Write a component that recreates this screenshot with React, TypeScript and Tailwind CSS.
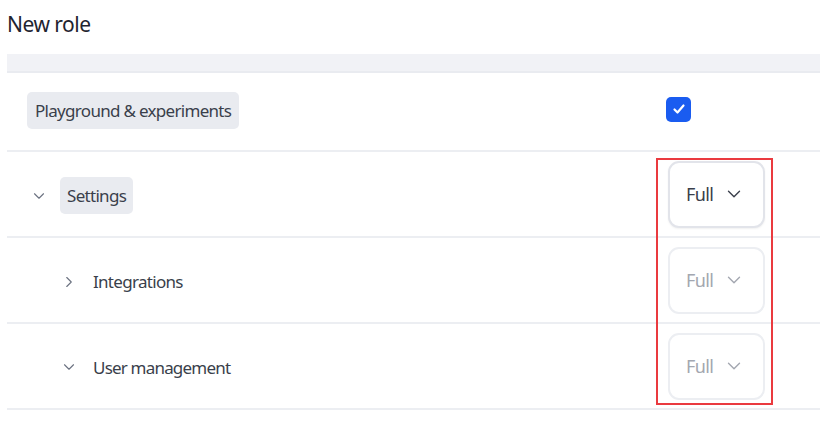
import { ChevronDown, ChevronRight } from 'lucide-react';

const font = { fontFamily: '"Noto Sans", "Liberation Sans", sans-serif' };

const Select = ({ disabled }: { disabled?: boolean }) => (
  <div
    className={
      'flex h-[67px] w-[97px] items-center rounded-[11px] border-2 bg-white pl-[16px] text-[18px] ' +
      (disabled
        ? 'border-[#eceef2] text-[#a3a7b0]'
        : 'border-[#e2e4ea] text-[#3a3f4b] shadow-[0_1px_2px_rgba(0,0,0,0.06)]')
    }
  >
    <span className="tracking-[-0.6px]">Full</span>
    <ChevronDown size={22} strokeWidth={1.5} className="ml-[10px]" />
  </div>
);

const App = () => {
  return (
    <div
      className="relative h-[429px] w-[820px] overflow-hidden bg-white pl-[7px] text-[#2c313c]"
      style={font}
    >
      {/* Title */}
      <div className="flex h-[54px] items-start pt-[9px] text-[21px] tracking-[-0.5px] text-[#1f2430]">
        New role
      </div>

      {/* Header bar */}
      <div className="h-[19px] border-b-2 border-[#e9ebf0] bg-[#f1f2f6]" />

      {/* Playground */}
      <div className="flex h-[79px] items-center border-b-2 border-[#eceef2] pl-[20px] pr-[129px]">
        <span className="mb-[2px] rounded-[5px] bg-[#e9ebf0] px-[8px] py-[6px] text-[17px] tracking-[-0.7px] text-[#3a3f4b]">
          Playground &amp; experiments
        </span>
        <div className="mb-[5px] ml-auto flex h-[25px] w-[25px] items-center justify-center rounded-[5px] bg-[#1a5cf0]">
          <svg width="14" height="14" viewBox="0 0 14 14" fill="none">
            <path d="M2.5 7.5L5.5 10.5L11.5 3.5" stroke="white" strokeWidth="2.2" strokeLinecap="round" strokeLinejoin="round" />
          </svg>
        </div>
      </div>

      {/* Settings */}
      <div className="flex h-[86px] items-center border-b-2 border-[#eceef2] pl-[23px] pr-[55px]">
        <ChevronDown size={18} strokeWidth={1.5} className="mt-[3px] text-[#6b7280]" />
        <span className="ml-[12px] mt-[3px] rounded-[5px] bg-[#e9ebf0] px-[7px] py-[6px] text-[17px] tracking-[-0.7px] text-[#3a3f4b]">
          Settings
        </span>
        <div className="ml-auto">
          <Select />
        </div>
      </div>

      {/* Integrations */}
      <div className="flex h-[86px] items-center border-b-2 border-[#eceef2] pl-[53px] pr-[55px]">
        <ChevronRight size={18} strokeWidth={1.5} className="mt-[3px] text-[#6b7280]" />
        <span className="ml-[15px] mt-[4px] text-[17px] tracking-[-0.7px] text-[#3a3f4b]">Integrations</span>
        <div className="ml-auto">
          <Select disabled />
        </div>
      </div>

      {/* User management */}
      <div className="flex h-[86px] items-center border-b-2 border-[#eceef2] pl-[53px] pr-[55px]">
        <ChevronDown size={18} strokeWidth={1.5} className="mt-[1px] text-[#6b7280]" />
        <span className="ml-[15px] mt-[4px] text-[17px] tracking-[-0.8px] text-[#3a3f4b]">User management</span>
        <div className="ml-auto">
          <Select disabled />
        </div>
      </div>

      {/* Highlight */}
      <div className="absolute left-[656px] top-[158px] h-[247px] w-[117px] border-2 border-[#ea3a3f]" />
    </div>
  );
};

export default App;
